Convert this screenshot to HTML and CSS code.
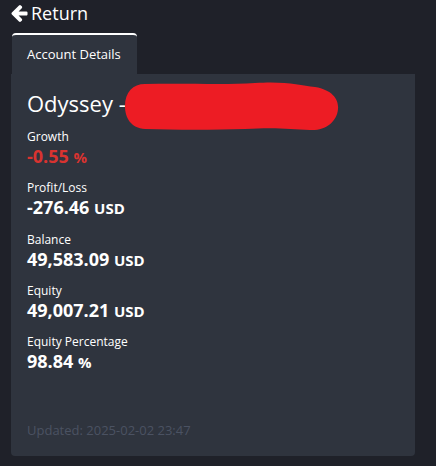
FILE: index.html
```html
<!DOCTYPE html>
<html>
<head>
<meta charset="utf-8">
<link rel="stylesheet" href="styles.css">
</head>
<body>
<div class="page">
  <a class="return" href="#">
    <svg class="return-icon" viewBox="64 118 1472 1557" width="17" height="17"><path fill="#fff" d="M1536 832v128q0 53-32.5 90.5t-84.5 37.5h-704l293 294q38 36 38 90t-38 90l-75 76q-37 37-90 37-52 0-91-37l-651-651q-37-37-37-90 0-52 37-91l651-650q38-38 91-38 52 0 90 38l75 74q38 38 38 91t-38 91l-293 293h704q52 0 84.5 37.5t32.5 90.5z"/></svg>
    <span>Return</span>
  </a>
  <div class="tabs">
    <div class="tab active">Account Details</div>
  </div>
  <div class="card">
    <h2 class="title">Odyssey -<svg class="redact" viewBox="0 0 214 50" width="214" height="50"><path fill="#ed1c24" d="M20 2 C60 1 100 3 130 1 C160 -1 175 3 190 5 C208 8 214 18 213 27 C212 40 200 49 185 48 C165 47 150 45 120 47 C90 48 50 48 20 47 C6 46 0 36 0 24 C0 10 8 2 20 2 Z"/></svg></h2>
    <div class="stat">
      <div class="label">Growth</div>
      <div class="value neg">-0.55 <span class="unit">%</span></div>
    </div>
    <div class="stat">
      <div class="label">Profit/Loss</div>
      <div class="value">-276.46 <span class="unit">USD</span></div>
    </div>
    <div class="stat">
      <div class="label">Balance</div>
      <div class="value">49,583.09 <span class="unit">USD</span></div>
    </div>
    <div class="stat">
      <div class="label">Equity</div>
      <div class="value">49,007.21 <span class="unit">USD</span></div>
    </div>
    <div class="stat">
      <div class="label">Equity Percentage</div>
      <div class="value">98.84 <span class="unit">%</span></div>
    </div>
    <div class="updated">Updated: 2025-02-02 23:47</div>
  </div>
</div>
</body>
</html>
```
FILE: styles.css
```css
html, body {
  margin: 0;
  padding: 0;
  background: #1f2129;
}
body {
  font-family: "Open Sans", "Noto Sans", sans-serif;
  color: #ffffff;
  width: 436px;
  height: 466px;
  overflow: hidden;
}
.page {
  padding: 0 21px 0 11px;
}
.return {
  display: flex;
  align-items: center;
  gap: 3px;
  height: 26px;
  color: #ffffff;
  text-decoration: none;
  font-size: 18px;
  line-height: 26px;
}
.return-icon {
  display: block;
}
.tabs {
  margin-top: 7px;
  display: flex;
  padding-left: 1px;
}
.tab {
  width: 125px;
  box-sizing: border-box;
  height: 41px;
  padding-left: 15px;
  font-size: 13px;
  line-height: 39px;
  background: #2f343e;
  border-top: 2px solid #ffffff;
  border-radius: 4px 4px 0 0;
  color: #ffffff;
}
.card {
  background: #2f343e;
  height: 382px;
  box-sizing: border-box;
  padding: 14px 16px 17px;
  border-radius: 0 0 4px 4px;
  display: flex;
  flex-direction: column;
}
.title {
  position: relative;
  margin: 0 0 10px;
  font-size: 22px;
  font-weight: 400;
  line-height: 30px;
}
.redact {
  position: absolute;
  left: 98px;
  top: -6px;
}
.stat {
  margin-bottom: 11.25px;
}
.label {
  font-size: 12px;
  line-height: 17px;
}
.value {
  font-size: 18px;
  font-weight: 700;
  line-height: 22px;
}
.value.neg {
  color: #d93330;
}
.unit {
  font-size: 15px;
}
.updated {
  margin-top: auto;
  font-size: 13px;
  color: #4b5262;
}
```
